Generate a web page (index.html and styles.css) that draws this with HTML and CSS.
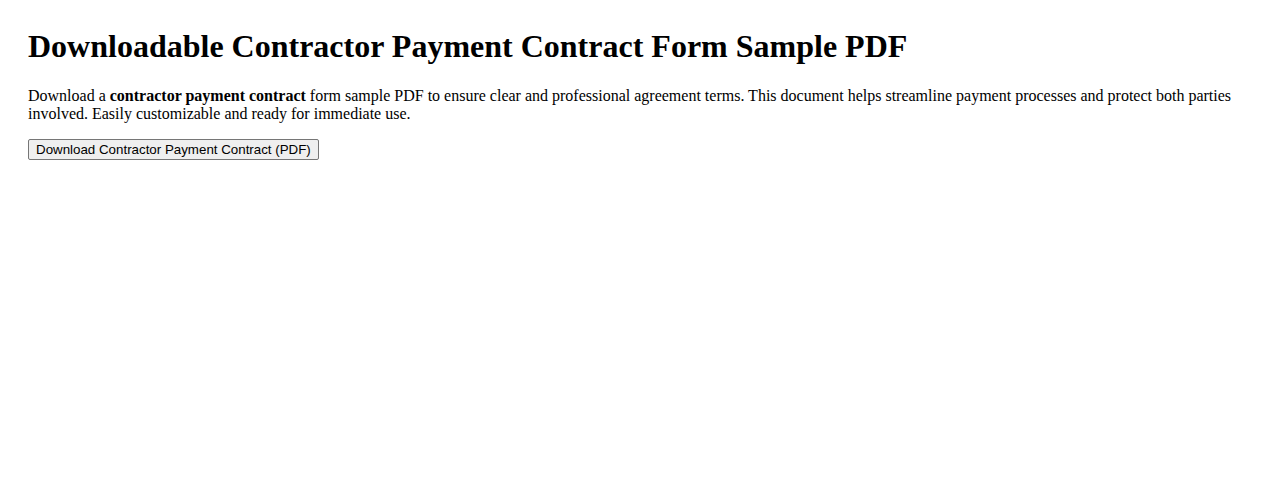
FILE: index.html
```html
<!DOCTYPE html>
<html lang="en">

<head>
    <meta charset="UTF-8">
    <meta name="viewport" content="width=device-width, initial-scale=1.0">
    <title>Contractor Payment Contract Form Sample PDF</title>
    <link rel="stylesheet" href="styles.css">
</head>

<body>
    <div class="page">
        <h1>Downloadable Contractor Payment Contract Form Sample PDF</h1>
        <p>Download a <strong>contractor payment contract</strong> form sample PDF to ensure clear and professional agreement terms. This document helps streamline payment processes and protect both parties involved. Easily customizable and ready for immediate use.</p>
        <button type="button" class="download-btn">Download Contractor Payment Contract (PDF)</button>
    </div>
</body>

</html>
```

FILE: styles.css
```css
body {
    margin: 8px;
    font-family: 'Liberation Serif', 'Times New Roman', serif;
    color: #000;
    background: #fff;
}

.page {
    padding: 20px;
}

.page h1 {
    font-size: 32px;
    margin: 0 0 22px;
}

.page p {
    font-size: 16px;
    margin: 0 0 16px;
}

.download-btn {
    font-family: 'Liberation Sans', Arial, sans-serif;
    font-size: 13.33px;
    padding: 2px 7px;
    color: #000;
    background-color: #efefef;
    border: 1px solid #767676;
    border-radius: 2px;
}
```
